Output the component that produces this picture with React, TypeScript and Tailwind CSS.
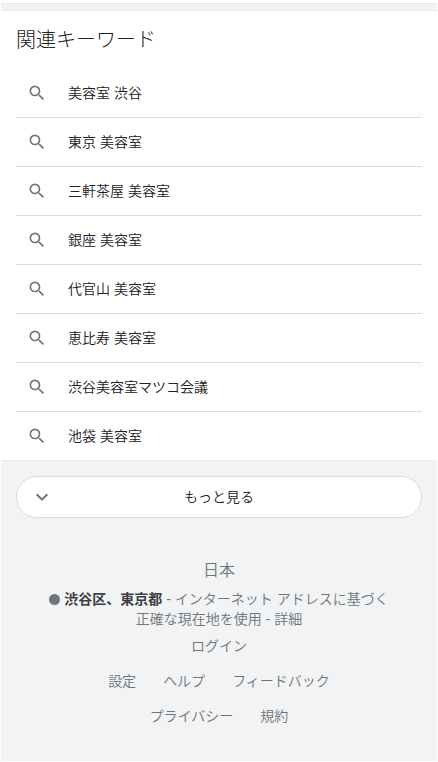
import React from 'react';
import { MdSearch } from 'react-icons/md';

const KEYWORDS = [
  '美容室 渋谷',
  '東京 美容室',
  '三軒茶屋 美容室',
  '銀座 美容室',
  '代官山 美容室',
  '恵比寿 美容室',
  '渋谷美容室マツコ会議',
  '池袋 美容室',
];

const RelatedKeywords: React.FC = () => (
  <section className="border-y border-[#e8eaed] bg-white px-[15px] pt-[13px]">
    <h2 className="pb-[13px] text-[20px] leading-8 font-light text-[#202124]">関連キーワード</h2>
    <ul className="divide-y divide-[#dadce0]">
      {KEYWORDS.map((keyword) => (
        <li key={keyword}>
          <a href="#" className="flex h-12 items-center gap-[21px] pl-[11px] text-sm text-[#202124]">
            <MdSearch className="size-5 text-[#757575]" />
            {keyword}
          </a>
        </li>
      ))}
    </ul>
  </section>
);

const ChevronDown: React.FC = () => (
  <svg viewBox="0 0 24 24" className="absolute left-[13px] size-6" fill="none" stroke="#70757a" strokeWidth="2">
    <path d="M6.7 9.3 12 14.6 17.3 9.3" />
  </svg>
);

const Footer: React.FC = () => (
  <footer className="pt-[41px] text-center text-sm leading-5 text-[#70757a]">
    <p className="text-base leading-6">日本</p>
    <p className="mt-[6px]">
      <span className="mr-1 inline-block size-[11px] rounded-full bg-[#70757a] align-[-1px]"></span>
      <b className="font-bold text-[#3c4043]">渋谷区、東京都</b> - インターネット アドレスに基づく
    </p>
    <p>
      <a href="#">正確な現在地を使用</a> - <a href="#">詳細</a>
    </p>
    <p className="mt-[7px]">
      <a href="#">ログイン</a>
    </p>
    <nav className="mt-[15px] flex flex-wrap justify-center gap-x-[27px] gap-y-[15px] px-20">
      <a href="#">設定</a>
      <a href="#">ヘルプ</a>
      <a href="#">フィードバック</a>
      <a href="#">プライバシー</a>
      <a href="#">規約</a>
    </nav>
  </footer>
);

export default function App() {
  return (
    <div className="flex min-h-screen flex-col bg-white px-px pt-[3px] pb-px font-['Liberation_Sans','Noto_Sans_CJK_JP',sans-serif] font-[350]">
      <div className="grow border-t border-[#e8eaed] bg-[#f1f3f4] pt-[6px]">
        <RelatedKeywords />
        <div className="px-[15px] pt-[15px]">
          <button className="relative flex h-[42px] w-full items-center justify-center rounded-full border border-[#dadce0] bg-white text-sm text-[#202124]">
            <ChevronDown />
            もっと見る
          </button>
        </div>
        <Footer />
      </div>
    </div>
  );
}
